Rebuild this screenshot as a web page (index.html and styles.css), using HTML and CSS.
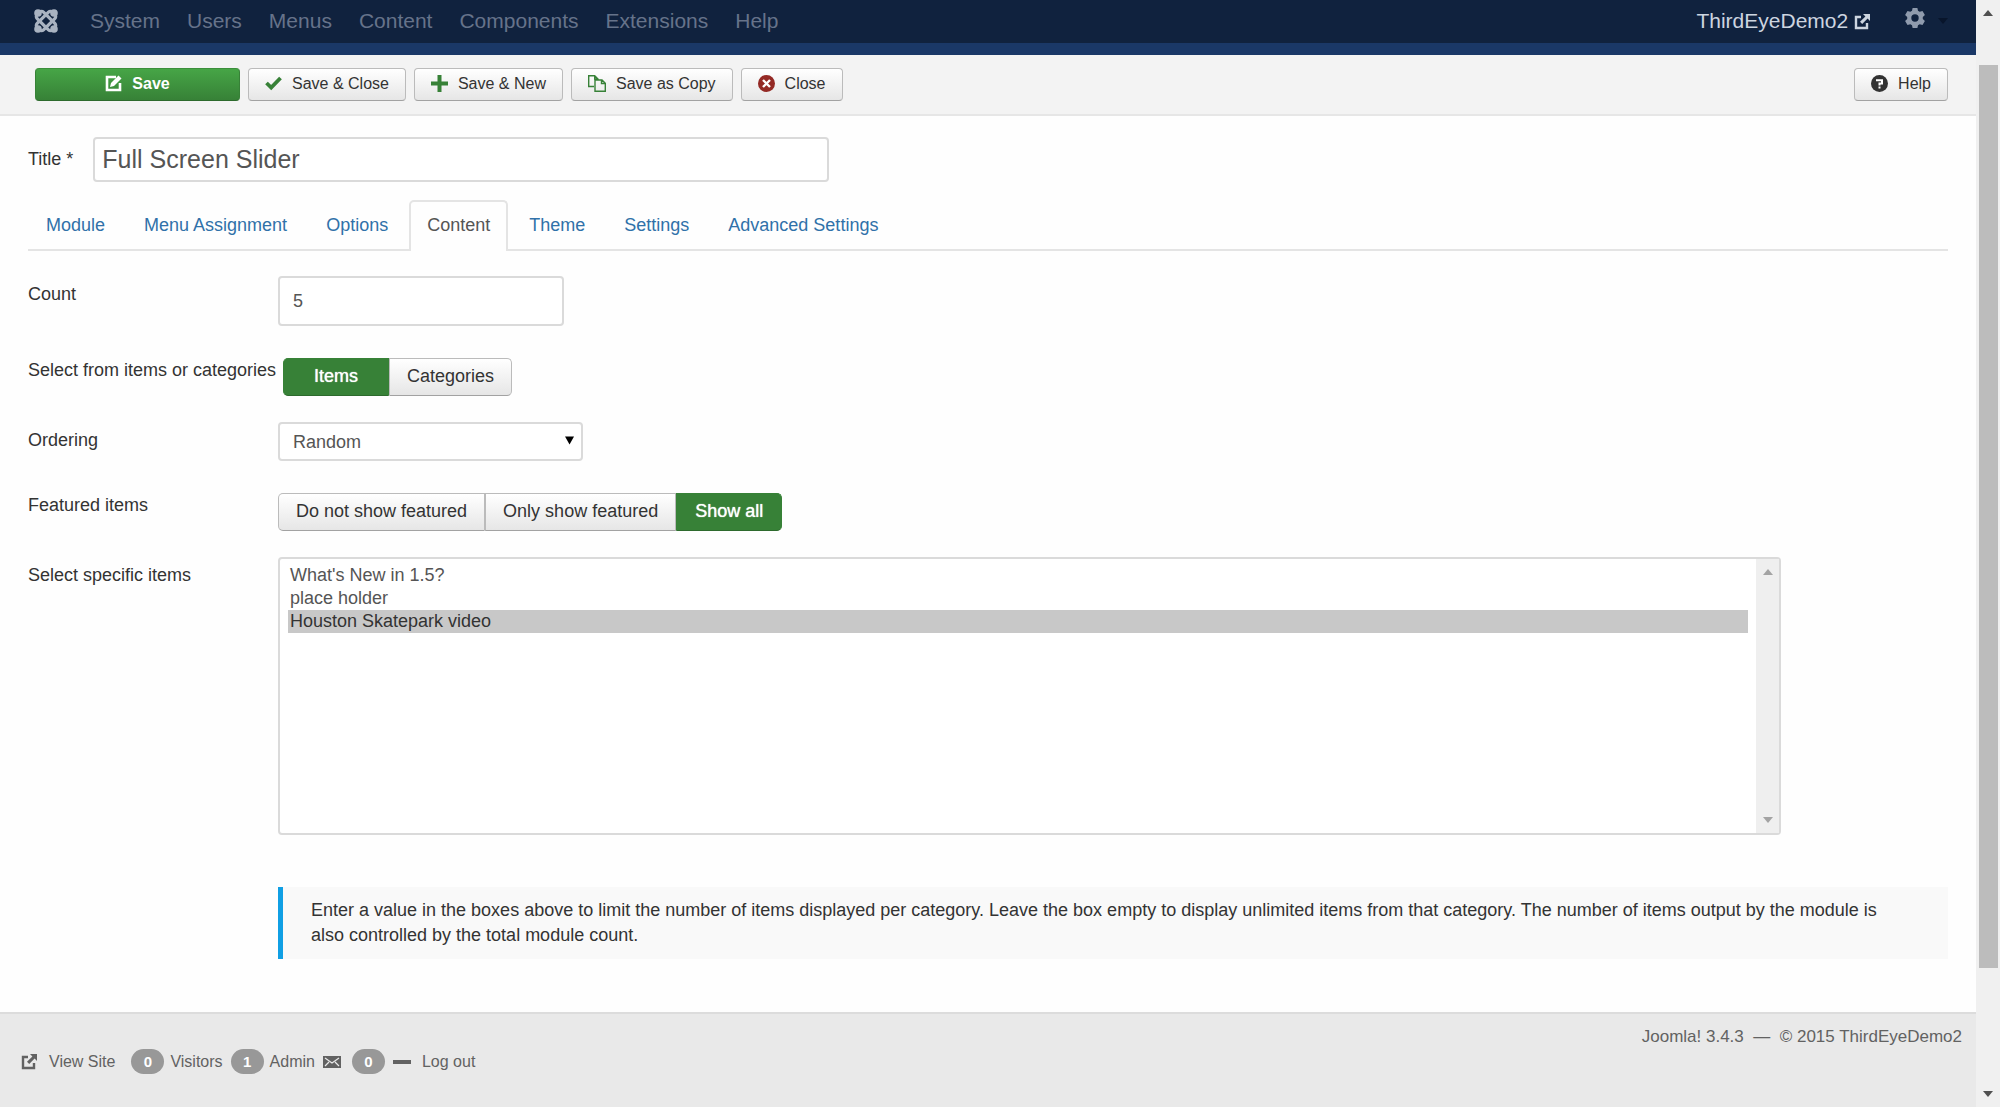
FILE: index.html
```html
<!DOCTYPE html>
<html lang="en">
<head>
    <meta charset="UTF-8">
    <meta name="viewport" content="width=device-width, initial-scale=1.0">
    <title>ThirdEyeDemo2 - Administration - Modules</title>
    <link rel="stylesheet" href="styles.css">
</head>
<body>

    <!-- icons used more than once -->
    <svg class="sprite" aria-hidden="true">
        <symbol id="icon-out" viewBox="0 0 16 16">
            <path d="M7 3H2v11h11V9" fill="none" stroke="currentColor" stroke-width="2.4"/>
            <path d="M9 0h7v7l-2.400-2.400-5.400 5.400-2.200-2.200 5.400-5.400z" fill="currentColor"/>
        </symbol>
        <symbol id="icon-up" viewBox="0 0 10 6">
            <path d="M0 6l5-6 5 6z" fill="currentColor"/>
        </symbol>
        <symbol id="icon-down" viewBox="0 0 10 6">
            <path d="M0 0l5 6 5-6z" fill="currentColor"/>
        </symbol>
    </svg>

    <div class="window">
        <div class="page">

            <nav class="navbar">
                <a class="logo" href="#" aria-label="Joomla">
                    <svg width="24" height="24" viewBox="0 0 24 24" fill="none" stroke="currentColor">
                        <g stroke-width="3.200">
                            <rect x="1" y="7.500" width="22" height="9" rx="3" transform="rotate(45 12 12)"/>
                            <rect x="1" y="7.500" width="22" height="9" rx="3" transform="rotate(-45 12 12)"/>
                        </g>
                        <g fill="currentColor" stroke="none">
                            <circle cx="4" cy="4" r="3.800"/>
                            <circle cx="20" cy="4" r="3.800"/>
                            <circle cx="4" cy="20" r="3.800"/>
                            <circle cx="20" cy="20" r="3.800"/>
                        </g>
                    </svg>
                </a>
                <ul class="menu">
                    <li><a href="#">System</a></li>
                    <li><a href="#">Users</a></li>
                    <li><a href="#">Menus</a></li>
                    <li><a href="#">Content</a></li>
                    <li><a href="#">Components</a></li>
                    <li><a href="#">Extensions</a></li>
                    <li><a href="#">Help</a></li>
                </ul>
                <a class="brand" href="#">ThirdEyeDemo2 <svg width="16" height="16"><use href="#icon-out"/></svg></a>
                <a class="user" href="#" aria-label="User menu">
                    <svg class="gear" width="20" height="20" viewBox="0 0 20 20">
                        <path fill="currentColor" fill-rule="evenodd" d="M7.600 0h4.800l.6 2.800 1.700 1 2.800-.9 2.400 4.100-2.100 2v2l2.100 2-2.400 4.100-2.800-.9-1.700 1-.6 2.800H7.600L7 17.200l-1.700-1-2.800.9L.1 13l2.100-2V9L.1 7l2.400-4.100 2.800.9 1.700-1zM10 6.300a3.700 3.700 0 1 0 0 7.400 3.700 3.700 0 0 0 0-7.400z"/>
                    </svg>
                    <svg class="caret" width="10" height="6"><use href="#icon-down"/></svg>
                </a>
            </nav>

            <div class="toolbar">
                <button class="btn btn-save" type="button">
                    <svg width="17" height="17" viewBox="0 0 17 17">
                        <path d="M11 2H2v13h13V8" fill="none" stroke="currentColor" stroke-width="2.600"/>
                        <path d="M5 12l1-4 7.500-7.500 3 3L9 11z" fill="currentColor"/>
                    </svg>
                    Save
                </button>
                <button class="btn" type="button">
                    <svg class="green" width="17" height="17" viewBox="0 0 17 17">
                        <path d="M1.500 8l4.700 4.500L15.500 3" fill="none" stroke="currentColor" stroke-width="3.800"/>
                    </svg>
                    Save &amp; Close
                </button>
                <button class="btn" type="button">
                    <svg class="green" width="17" height="17" viewBox="0 0 17 17">
                        <path d="M8.500 0v17M0 8.500h17" fill="none" stroke="currentColor" stroke-width="4"/>
                    </svg>
                    Save &amp; New
                </button>
                <button class="btn" type="button">
                    <svg class="green" width="18" height="17" viewBox="0 0 18 17">
                        <path d="M6 11.500H.7V.7h6L10 4v1M6.700.7V4H10M7 5h7l3.300 3.300v8H7zM13.500 5v3.500h3.800" fill="none" stroke="currentColor" stroke-width="1.400"/>
                    </svg>
                    Save as Copy
                </button>
                <button class="btn" type="button">
                    <svg class="red" width="17" height="17" viewBox="0 0 17 17">
                        <circle cx="8.500" cy="8.500" r="8.500" fill="currentColor"/>
                        <path d="M5 5l7 7M12 5l-7 7" stroke="#fff" stroke-width="2.400"/>
                    </svg>
                    Close
                </button>
                <button class="btn btn-help" type="button">
                    <svg width="17" height="17" viewBox="0 0 17 17">
                        <circle cx="8.500" cy="8.500" r="8.500" fill="currentColor"/>
                        <path d="M5 5.200h6v3.200H8.500v2" fill="none" stroke="#fff" stroke-width="2"/>
                        <path d="M7.500 11.500h2v2h-2z" fill="#fff"/>
                    </svg>
                    Help
                </button>
            </div>

            <main class="content">
                <div class="title-row">
                    <label for="title">Title *</label>
                    <input class="field title-input" id="title" type="text" value="Full Screen Slider">
                </div>

                <ul class="tabs">
                    <li><a href="#">Module</a></li>
                    <li><a href="#">Menu Assignment</a></li>
                    <li><a href="#">Options</a></li>
                    <li><a class="active" href="#">Content</a></li>
                    <li><a href="#">Theme</a></li>
                    <li><a href="#">Settings</a></li>
                    <li><a href="#">Advanced Settings</a></li>
                </ul>

                <form class="params">
                    <div class="control">
                        <label class="control-label" for="count">Count</label>
                        <input class="field count-input" id="count" type="text" value="5">
                    </div>

                    <div class="control">
                        <span class="control-label" id="source-label">Select from items or categories</span>
                        <div class="btn-group source-group" role="radiogroup" aria-labelledby="source-label">
                            <input type="radio" name="source" id="source-items" checked>
                            <label for="source-items">Items</label>
                            <input type="radio" name="source" id="source-categories">
                            <label for="source-categories">Categories</label>
                        </div>
                    </div>

                    <div class="control">
                        <label class="control-label" for="ordering">Ordering</label>
                        <div class="dropdown">
                            <select class="field" id="ordering">
                                <option>Random</option>
                            </select>
                            <svg width="9" height="9" viewBox="0 0 10 9"><path d="M0 0h10L5 9z"/></svg>
                        </div>
                    </div>

                    <div class="control">
                        <span class="control-label" id="featured-label">Featured items</span>
                        <div class="btn-group" role="radiogroup" aria-labelledby="featured-label">
                            <input type="radio" name="featured" id="featured-no">
                            <label for="featured-no">Do not show featured</label>
                            <input type="radio" name="featured" id="featured-only">
                            <label for="featured-only">Only show featured</label>
                            <input type="radio" name="featured" id="featured-all" checked>
                            <label for="featured-all">Show all</label>
                        </div>
                    </div>

                    <div class="control">
                        <label class="control-label" for="items">Select specific items</label>
                        <div class="listbox">
                            <select id="items" size="10" multiple>
                                <option>What's New in 1.5?</option>
                                <option>place holder</option>
                                <option selected>Houston Skatepark video</option>
                            </select>
                            <div class="list-scroll" aria-hidden="true">
                                <svg width="10" height="6"><use href="#icon-up"/></svg>
                                <svg width="10" height="6"><use href="#icon-down"/></svg>
                            </div>
                        </div>
                    </div>

                    <p class="note">Enter a value in the boxes above to limit the number of items displayed per category. Leave the box empty to display unlimited items from that category. The number of items output by the module is also controlled by the total module count.</p>
                </form>
            </main>

            <footer class="footer">
                <div class="status">
                    <a href="#"><svg class="out" width="16" height="16"><use href="#icon-out"/></svg>View Site</a>
                    <span class="stat"><span class="badge">0</span>Visitors</span>
                    <span class="stat"><span class="badge">1</span>Admin</span>
                    <a class="mail" href="#" aria-label="Messages">
                        <svg width="18" height="12" viewBox="0 0 18 12">
                            <path d="M0 0h18v12H0z" fill="currentColor"/>
                            <path d="M2 2l7 5 7-5M2 10l4-4M16 10l-4-4" fill="none" stroke="#e9e9e9" stroke-width="1.200"/>
                        </svg>
                        <span class="badge">0</span>
                    </a>
                    <a class="logout" href="#"><svg width="18" height="4"><path d="M0 0h18v4H0z" fill="currentColor"/></svg>Log out</a>
                </div>
                <p class="copyright">Joomla! 3.4.3 &nbsp;&mdash;&nbsp; &copy; 2015 ThirdEyeDemo2</p>
            </footer>

        </div>

        <div class="scrollbar" aria-hidden="true">
            <svg width="10" height="6"><use href="#icon-up"/></svg>
            <div class="track"><div class="thumb"></div></div>
            <svg width="10" height="6"><use href="#icon-down"/></svg>
        </div>
    </div>

</body>
</html>
```
FILE: styles.css
```css
* {
    box-sizing: border-box;
}
body {
    margin: 0;
    background: #fefefe;
    color: #333;
    font-family: "Liberation Sans", Arial, sans-serif;
    font-size: 18px;
    line-height: 25px;
}
a {
    color: inherit;
    text-decoration: none;
}
ul {
    list-style: none;
    margin: 0;
    padding: 0;
}
input, select, button {
    font-family: inherit;
}
.sprite {
    position: absolute;
    width: 0;
    height: 0;
}
.window {
    display: flex;
    min-height: 100vh;
}
.page {
    flex: 1;
    min-width: 0;
    display: flex;
    flex-direction: column;
}

/* top bar */
.navbar {
    display: flex;
    align-items: center;
    height: 55px;
    padding: 0 28px 2px 34px;
    background: #10223e;
    border-bottom: 12px solid #1a3867;
    font-size: 21px;
    color: #66738a;
}
.logo {
    height: 24px;
    margin-right: 32px;
    color: #a9b3c1;
}
.logo svg, .user svg {
    display: block;
}
.menu {
    display: flex;
    gap: 27px;
}
.brand {
    margin-left: auto;
    color: #cdd5e0;
}
.brand svg {
    vertical-align: -2px;
}
.user {
    display: flex;
    align-items: center;
    gap: 13px;
    margin-left: 35px;
}
.gear {
    margin-bottom: 6px;
    color: #8f9bad;
}
.caret {
    color: #08152b;
}

/* toolbar */
.toolbar {
    display: flex;
    align-items: center;
    gap: 8px;
    height: 61px;
    padding: 0 28px 1px 35px;
    background: #f3f3f3;
    border-bottom: 2px solid #e6e6e6;
}
.btn {
    display: flex;
    align-items: center;
    justify-content: center;
    gap: 10px;
    height: 33px;
    padding: 0 16px;
    border: 1px solid #bbb;
    border-bottom-color: #a2a2a2;
    border-radius: 4px;
    background: linear-gradient(#fff, #e6e6e6);
    color: #333;
    font-size: 16px;
    cursor: pointer;
}
.btn svg {
    margin-bottom: 2px;
}
.btn-save {
    width: 205px;
    border-color: #3b8f3b #378137 #2d6a2d;
    background: linear-gradient(#46a546, #378137);
    color: #fff;
    font-weight: bold;
}
.btn-help {
    margin-left: auto;
}
.green {
    color: #378137;
}
.red {
    color: #942a25;
}

/* form */
.content {
    flex: 1;
    padding: 21px 28px 52px;
}
.field {
    border: 2px solid #dadada;
    border-radius: 4px;
    background: #fff;
    color: #555;
    font-size: 18px;
}
.title-row {
    display: flex;
    align-items: center;
    gap: 20px;
}
.title-input {
    width: 736px;
    height: 45px;
    padding: 0 7px;
    font-size: 25px;
}
.tabs {
    display: flex;
    gap: 3px;
    margin-top: 18px;
    border-bottom: 2px solid #e4e4e4;
}
.tabs a {
    display: block;
    height: 49px;
    padding: 11px 16px;
    border: 2px solid transparent;
    border-bottom: 0;
    border-radius: 5px 5px 0 0;
    color: #3071a9;
}
.tabs .active {
    margin-bottom: -2px;
    height: 51px;
    border-color: #e4e4e4;
    background: #fefefe;
    color: #555;
}
.params {
    margin-top: 25px;
}
.control {
    display: flex;
    align-items: flex-start;
    margin-bottom: 26px;
}
.control-label {
    flex: 0 0 250px;
    padding-top: 6px;
    white-space: nowrap;
}
.count-input {
    width: 286px;
    height: 50px;
    padding: 0 13px;
}
.btn-group {
    display: flex;
    padding-top: 6px;
}
.source-group {
    margin-left: 5px;
}
.btn-group input {
    position: absolute;
    opacity: 0;
}
.btn-group label {
    height: 38px;
    min-width: 106px;
    padding: 5px 17px;
    border: 1px solid #bbb;
    border-bottom-color: #a2a2a2;
    background: linear-gradient(#fff, #e6e6e6);
    text-align: center;
    cursor: pointer;
}
.btn-group label:first-of-type {
    border-radius: 5px 0 0 5px;
}
.btn-group label:last-of-type {
    border-radius: 0 5px 5px 0;
}
.btn-group input:checked + label {
    border-color: #378137;
    border-bottom-color: #2d6a2d;
    background: #378137;
    color: #fff;
    text-shadow: 0 0 1px #fff;
}
.dropdown {
    position: relative;
    width: 305px;
}
.dropdown select {
    display: block;
    width: 100%;
    height: 39px;
    padding: 0 13px;
    appearance: none;
}
.dropdown svg {
    position: absolute;
    top: 14px;
    right: 9px;
    pointer-events: none;
}
.listbox {
    display: flex;
    width: calc((100% - 250px) * 0.9);
    height: 278px;
    border: 2px solid #dadada;
    border-radius: 4px;
    background: #fff;
}
.listbox select {
    flex: 1;
    min-width: 0;
    padding: 5px 8px;
    border: 0;
    outline: 0;
    background: none;
    color: #555;
    font-size: 18px;
    overflow: hidden;
}
.listbox option {
    padding: 1px 2px;
}
.listbox option:checked {
    background: #c8c8c8 linear-gradient(#c8c8c8, #c8c8c8);
    color: #333;
}
.list-scroll {
    display: flex;
    flex-direction: column;
    align-items: center;
    justify-content: space-between;
    width: 23px;
    padding: 10px 0;
    background: #efefef;
    color: #a3a3a3;
}
.note {
    margin: 52px 0 0 250px;
    padding: 11px 60px 11px 28px;
    border-left: 5px solid #109fe4;
    background: #f9f9f9;
}

/* footer */
.footer {
    display: flex;
    justify-content: space-between;
    height: 95px;
    padding: 10px 14px 0 21px;
    border-top: 2px solid #dcdcdc;
    background: #e9e9e9;
    color: #626262;
}
.status {
    display: flex;
    align-items: center;
    align-self: flex-start;
    margin-top: 25px;
    font-size: 16px;
}
.status a, .stat {
    display: flex;
    align-items: center;
}
.stat {
    gap: 6px;
    margin-right: 8px;
}
.out {
    margin-right: 12px;
}
.status a:first-child {
    margin-right: 16px;
}
.badge {
    width: 33px;
    border-radius: 13px;
    background: #989898;
    color: #fff;
    font-size: 15px;
    font-weight: bold;
    text-align: center;
}
.mail, .logout {
    gap: 11px;
}
.mail {
    margin-right: 8px;
}
.copyright {
    margin: 0;
    font-size: 17px;
}

/* window scrollbar */
.scrollbar {
    display: flex;
    flex-direction: column;
    align-items: center;
    width: 24px;
    padding: 10px 0;
    background: #f0f0f0;
    color: #505050;
}
.track {
    flex: 1;
    width: 19px;
    padding: 49px 0 55px;
}
.thumb {
    height: 93%;
    background: #bcbcbc;
}
```
